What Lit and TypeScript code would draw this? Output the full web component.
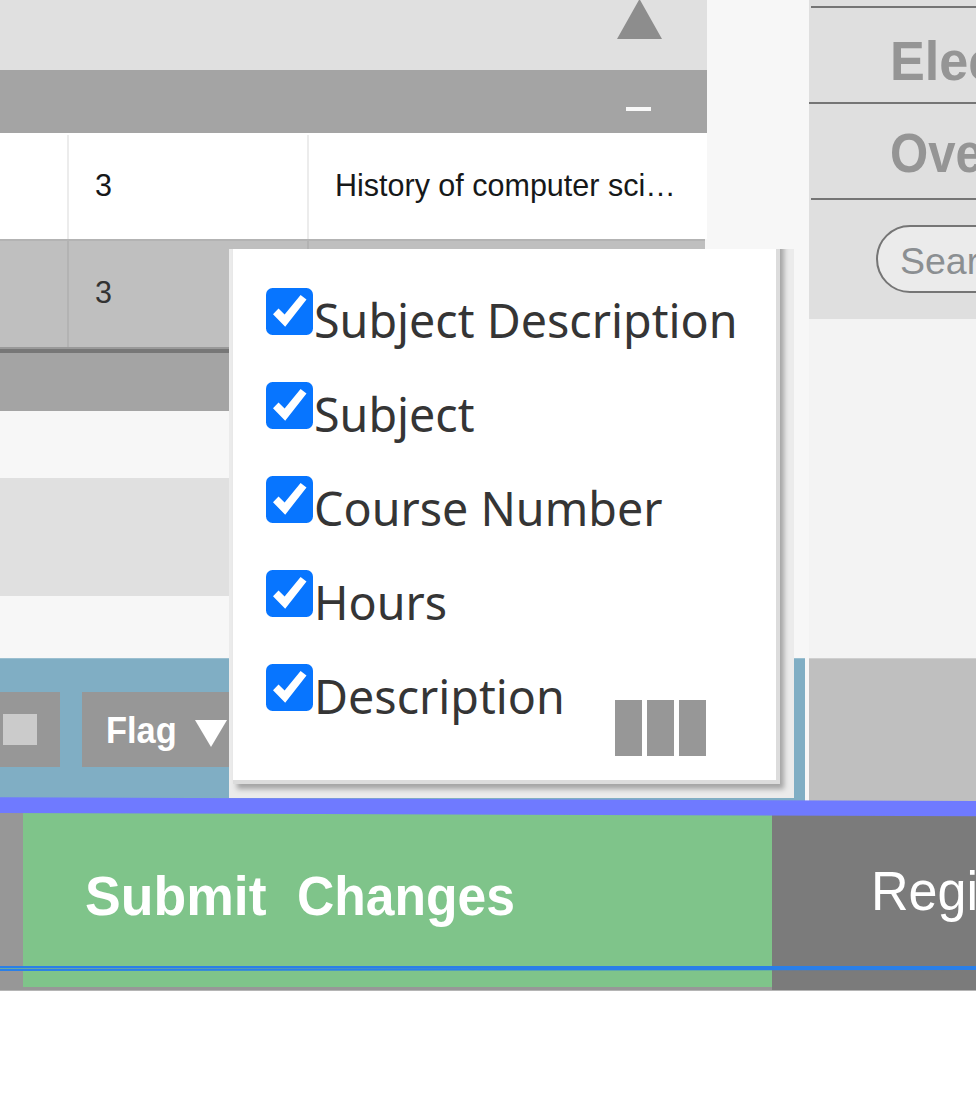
import { LitElement, html, svg, css } from "lit";
import { customElement, property } from "lit/decorators.js";

@customElement("column-option")
class ColumnOption extends LitElement {
  @property() label = "";

  static styles = css`
    :host { display: flex; height: 94px; align-items: flex-start; }
    .box { flex: none; width: 47px; height: 47px; margin-top: 1px; }
    .name {
      font: 48px/66px "Noto Sans", sans-serif;
      color: #353535;
      white-space: nowrap;
      margin: 0 0 0 1px;
      transform: scaleX(0.971);
      transform-origin: 0 50%;
    }
  `;

  render() {
    return html`
      <svg class="box" viewBox="0 0 47 47">
        <rect width="47" height="47" rx="6.5" fill="#0775ff" />
        <path d="M7 26.3 L12.5 20.6 L18.6 26.6 L34.6 7 L40.5 11.6 L19.2 38.7 Z" fill="#fff" />
      </svg>
      <span class="name">${this.label}</span>
    `;
  }
}

@customElement("app-root")
class AppRoot extends LitElement {
  private options = ["Subject Description", "Subject", "Course Number", "Hours", "Description"];

  static styles = css`
    :host {
      display: block;
      position: relative;
      width: 976px;
      height: 1094px;
      overflow: hidden;
      background: #fff;
      font-family: "Liberation Sans", Arial, sans-serif;
    }
    * { box-sizing: border-box; }
    .top { display: grid; grid-template-columns: 809px 167px; height: 801px; }
    .main { background: #f7f7f7; display: flex; flex-direction: column; }
    .table { width: 707px; }
    .head { height: 70px; background: #e0e0e0; display: flex; justify-content: flex-end; padding-right: 45px; }
    .head svg { width: 45px; height: 39px; }
    .group { height: 63px; background: #a4a4a4; display: flex; justify-content: flex-end; padding: 37px 56px 0 0; }
    .group i { width: 25px; height: 3.5px; background: #f8f8f8; }
    .row { display: grid; grid-template-columns: 69px 240px 1fr; height: 106px; background: #fff; padding-top: 2px; }
    .cell { border-right: 2px solid #ececec; padding-left: 26px; font-size: 30.5px; line-height: 101px; color: #161819; white-space: nowrap; }
    .cell:last-child { border-right: 0; }
    .row.alt { width: 705px; height: 108px; background: #bfbfbf; border-top: 2px solid #b3b3b3; padding: 0; }
    .alt .cell { border-color: #b3b3b3; color: #333; line-height: 102px; }
    .rule { height: 6px; background: #777; border-top: 2px solid #999; }
    .foot { height: 58px; background: #a4a4a4; }
    .band { height: 118px; margin-top: 67px; background: #e0e0e0; }
    .tools { width: 805px; height: 143px; margin-top: 62px; background: #80aec4; display: flex; gap: 22px; padding-top: 33px; border-top: 1px solid #9bbfd0; }
    .tool { height: 75px; background: #979797; color: #fff; display: flex; }
    .stop { width: 60px; padding: 22px 0 0 3px; }
    .stop i { width: 34px; height: 31px; background: #cbcbcb; }
    .flag { width: 170px; padding-left: 24px; font: bold 37px/78px "Liberation Sans", sans-serif; }
    .flag span { width: 89px; transform: scaleX(0.93); }
    .flag svg { flex: none; width: 32px; height: 27px; margin-top: 28px; }

    .side { background: #f3f3f3; display: flex; flex-direction: column; overflow: hidden; }
    .panel { height: 319px; background: #dfdfdf; padding-top: 6px; }
    .link { height: 96px; border-top: 2px solid #757575; padding-left: 81px; font: bold 55.5px/98px "Liberation Sans", sans-serif; color: #959595; white-space: nowrap; }
    .link span, .search span, .flag span, .submit span, .register span { display: inline-block; transform-origin: 0 50%; }
    .link.a { margin-left: 2px; padding-left: 79px; line-height: 106px; }
    .link.a span { transform: scaleX(0.94); }
    .link.b span { transform: scaleX(0.885); }
    .find { height: 119px; margin-left: 2px; border-top: 2px solid #757575; padding: 25px 0 0 65px; }
    .search { width: 200px; height: 68px; border: 2px solid #757575; border-radius: 34px; background: #ebebeb; padding-left: 22px; font-size: 37.5px; line-height: 68px; color: #8b8f92; }
    .status { margin-top: 339px; height: 143px; background: #bfbfbf; border-top: 1px solid #cfcfcf; }

    .bottom { display: grid; grid-template-columns: 23px 749px 204px; height: 190px; background: #979797; color: #fff; white-space: nowrap; overflow: hidden; }
    .submit { background: #7fc48a; height: 186px; padding-left: 62px; font: bold 55.5px/190px "Liberation Sans", sans-serif; }
    .submit span { width: 212px; transform: scaleX(0.965); }
    .submit span + span { transform: scaleX(0.93); }
    .register { background: #7b7b7b; padding-left: 99px; font-size: 56px; line-height: 180px; }
    .register span { transform: scaleX(0.93); }
    .lines { position: absolute; left: 0; top: 790px; width: 976px; height: 210px; }

    .menu { position: absolute; left: 229px; top: 249px; width: 565px; height: 549px; background: #ebebeb; padding-left: 4px; overflow: hidden; }
    .sheet { position: relative; width: 547px; height: 555px; margin-top: -20px; background: #fff; border: solid #dcdcdc; border-width: 0 4px 4px 0; box-shadow: 4px 5px 5px 0 #a4a4a4; padding: 58px 0 0 33px; }
    .columns { position: absolute; right: 70px; bottom: 24px; display: flex; gap: 5px; }
    .columns i { width: 27px; height: 56px; background: #979797; }
  `;

  render() {
    return html`
      <div class="top">
        <main class="main">
          <div class="table">
            <div class="head"><svg viewBox="0 0 45 39"><path d="M22.5 -1 L45 39 H0 Z" fill="#8d8d8d" /></svg></div>
            <div class="group"><i></i></div>
            <div class="row"><div class="cell"></div><div class="cell">3</div><div class="cell">History of computer sci…</div></div>
            <div class="row alt"><div class="cell"></div><div class="cell">3</div><div class="cell"></div></div>
            <div class="rule"></div>
            <div class="foot"></div>
            <div class="band"></div>
          </div>
          <div class="tools">
            <div class="tool stop"><i></i></div>
            <div class="tool flag"><span>Flag</span><svg viewBox="0 0 32 27"><path d="M0 0 H32 L16 27 Z" fill="#fff" /></svg></div>
          </div>
        </main>
        <aside class="side">
          <div class="panel">
            <div class="link a"><span>Elec</span></div>
            <div class="link b"><span>Ove</span></div>
            <div class="find"><div class="search"><span>Sear</span></div></div>
          </div>
          <div class="status"></div>
        </aside>
      </div>
      <div class="bottom">
        <div></div>
        <div class="submit"><span>Submit</span><span>Changes</span></div>
        <div class="register"><span>Regi</span></div>
      </div>
      <div class="menu">
        <div class="sheet">
          ${this.options.map((o) => html`<column-option .label=${o}></column-option>`)}
          <div class="columns"><i></i><i></i><i></i></div>
        </div>
      </div>
      <svg class="lines" viewBox="0 790 976 210">
        <defs>
          <linearGradient id="gap"><stop offset="0" stop-color="#6aa99f" /><stop offset="0.5" stop-color="#5098b5" /><stop offset="1" stop-color="#2a7fe8" /></linearGradient>
        </defs>
        ${svg`
          <path d="M0 797.3 L976 801 V816.3 L0 813 Z" fill="#6f7aff" />
          <path d="M0 966 H976 V970 L0 971 Z" fill="#2a7fe8" />
          <rect x="0" y="968" width="520" height="1" fill="url(#gap)" />
          <path d="M0 990.5 H976" stroke="#b5b5b5" stroke-width="1" />
        `}
      </svg>
    `;
  }
}
